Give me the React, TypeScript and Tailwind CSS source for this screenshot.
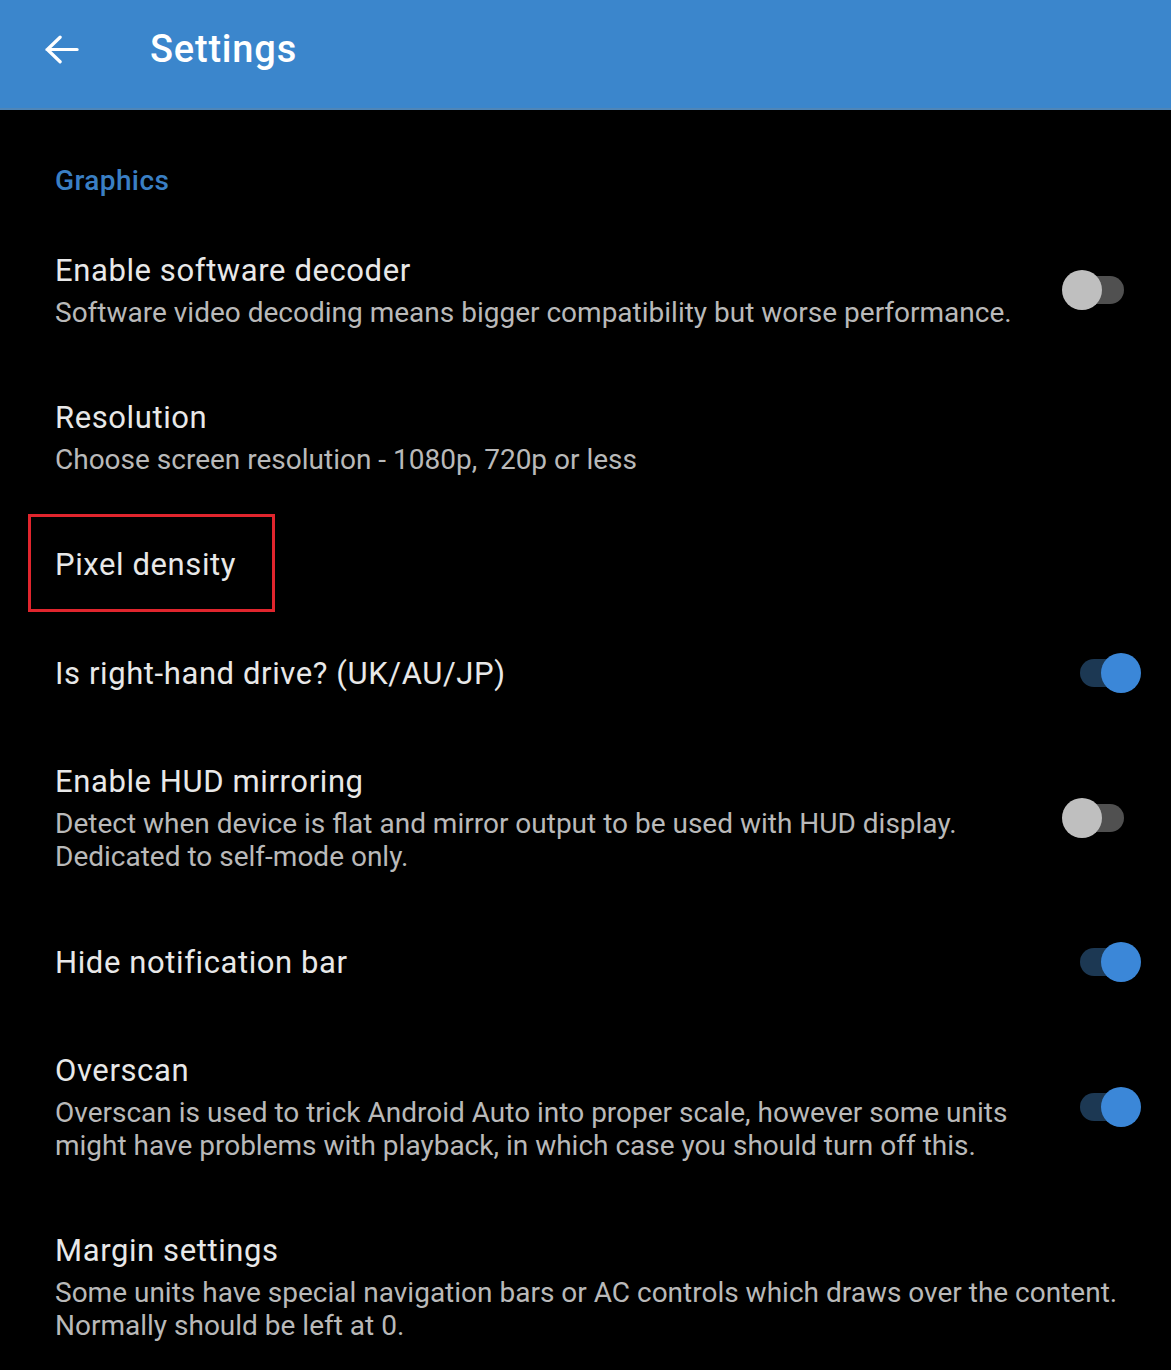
import { ReactNode } from "react";

interface SettingItem {
  title: string;
  lines?: string[];
  toggle?: "on" | "off";
  marked?: boolean;
}

const items: SettingItem[] = [
  {
    title: "Enable software decoder",
    lines: ["Software video decoding means bigger compatibility but worse performance."],
    toggle: "off",
  },
  {
    title: "Resolution",
    lines: ["Choose screen resolution - 1080p, 720p or less"],
  },
  { title: "Pixel density", marked: true },
  { title: "Is right-hand drive? (UK/AU/JP)", toggle: "on" },
  {
    title: "Enable HUD mirroring",
    lines: [
      "Detect when device is flat and mirror output to be used with HUD display.",
      "Dedicated to self-mode only.",
    ],
    toggle: "off",
  },
  { title: "Hide notification bar", toggle: "on" },
  {
    title: "Overscan",
    lines: [
      "Overscan is used to trick Android Auto into proper scale, however some units",
      "might have problems with playback, in which case you should turn off this.",
    ],
    toggle: "on",
  },
  {
    title: "Margin settings",
    lines: [
      "Some units have special navigation bars or AC controls which draws over the content.",
      "Normally should be left at 0.",
    ],
  },
];

// switch: thumb hangs over both ends of the short track
const Toggle = ({ on }: { on: boolean }) => (
  <div className="relative w-[79px] h-[40px] shrink-0">
    <div
      className={`absolute left-[18px] w-[44px] top-[6px] h-[28px] rounded-full ${
        on ? "bg-[#1c3853]" : "bg-[#505050]"
      }`}
    />
    <div
      className={`absolute top-0 w-[40px] h-[40px] rounded-full ${
        on ? "right-0 bg-[#3b87d8]" : "left-0 bg-[#bfbfbf]"
      }`}
    />
  </div>
);

const Row = ({ item }: { item: SettingItem }) => {
  let right: ReactNode = null;
  if (item.toggle) right = <Toggle on={item.toggle === "on"} />;

  return (
    <div className="relative flex items-center pl-[55px] pr-[30px] pt-[35px] pb-[34px]">
      <div className="flex-1 min-w-0">
        <div className="text-[31px] leading-[39px] tracking-[0.6px] text-[#e8e8e8] whitespace-nowrap">
          {item.title}
        </div>
        {item.lines && (
          <div className="mt-[6px] text-[28px] leading-[33px] text-[#b9b9b9] whitespace-nowrap">
            {item.lines.map((l) => (
              <div key={l}>{l}</div>
            ))}
          </div>
        )}
      </div>
      {right}
      {item.marked && (
        <div className="absolute left-[28px] top-[4px] w-[247px] h-[98px] border-[3px] border-[#e0252d]" />
      )}
    </div>
  );
};

export default function App() {
  return (
    <div className="w-[1171px] h-[1370px] bg-black overflow-hidden font-['Roboto',sans-serif]">
      {/* app bar */}
      <div className="h-[110px] pb-[10px] bg-[#3b86cc] border-b-[2px] border-[#4f86b8] flex items-center">
        <div className="w-[150px] pl-[45px] flex items-center">
          <svg width="34" height="29" viewBox="0 0 36 30" fill="none">
            <path
              d="M2 15H34M16 2L2.5 15L16 28"
              stroke="white"
              strokeWidth="3.4"
              strokeLinecap="round"
              strokeLinejoin="round"
            />
          </svg>
        </div>
        <div className="text-[38px] tracking-[0.8px] font-medium text-white leading-none">Settings</div>
      </div>

      <div className="pt-[56px] pl-[55px] pb-[20px] text-[28px] tracking-[0.4px] leading-[30px] font-medium text-[#3a7fc4]">
        Graphics
      </div>

      {items.map((it) => (
        <Row key={it.title} item={it} />
      ))}
    </div>
  );
}
